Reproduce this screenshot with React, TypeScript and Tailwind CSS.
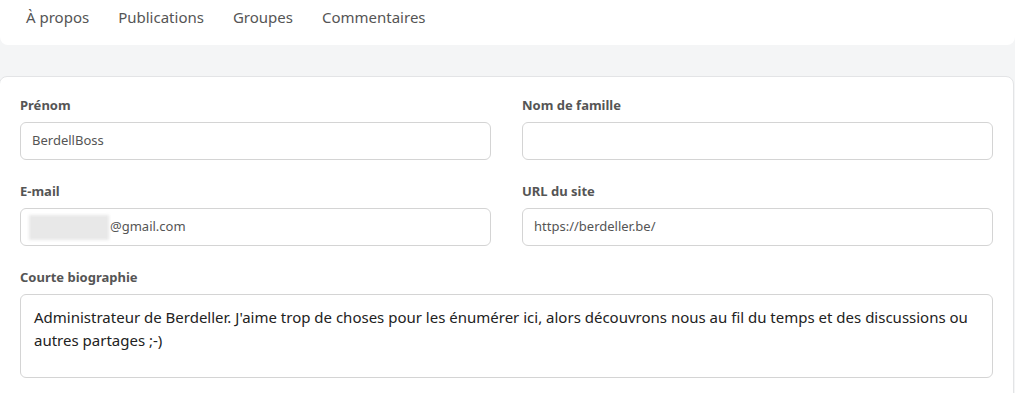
const tabs = ['À propos', 'Publications', 'Groupes', 'Commentaires']

function Field({ label, value, children }: { label: string; value?: string; children?: React.ReactNode }) {
  return (
    <div className="flex flex-col">
      <label className="text-[13px] font-bold text-[#555] leading-[18px] mb-[8px]">{label}</label>
      <div className="relative h-[38px] rounded-[6px] border border-[#d4d4d4] bg-white flex items-center px-[11px]">
        {children}
        {value && <span className="text-[13px] text-[#555]">{value}</span>}
      </div>
    </div>
  )
}

export default function App() {
  return (
    <div
      className="min-h-[393px] bg-[#f4f5f6] overflow-hidden"
      style={{ fontFamily: '"Segoe UI", "Noto Sans", "Open Sans", sans-serif' }}
    >
      {/* Tabs */}
      <div className="h-[45px] bg-white rounded-b-[8px] flex items-start gap-[29px] pl-[26px] pt-[6px]">
        {tabs.map((t) => (
          <span key={t} className="text-[15px] text-[#555] leading-[22px]">
            {t}
          </span>
        ))}
      </div>

      {/* Profile form */}
      <div className="mt-[31px] mr-px -ml-px bg-white border border-[#e3e4e6] rounded-t-[8px] px-[20px] pt-[19px] pb-[20px]">
        <div className="grid grid-cols-2 gap-x-[31px] gap-y-[22px]">
          <Field label="Prénom" value="BerdellBoss" />
          <Field label="Nom de famille" />
          <Field label="E-mail">
            <span className="w-[80px] h-[25px] -ml-[3px] mr-[1px] bg-[#e8e8e8] blur-[1.5px]" />
            <span className="text-[13px] text-[#555]">@gmail.com</span>
          </Field>
          <Field label="URL du site" value="https://berdeller.be/" />
          <div className="col-span-2 flex flex-col">
            <label className="text-[13px] font-bold text-[#555] leading-[18px] mb-[8px]">Courte biographie</label>
            <textarea
              readOnly
              className="h-[84px] resize-none rounded-[6px] border border-[#d4d4d4] px-[13px] pt-[11px] text-[15px] leading-[23px] text-[#222] outline-none"
              defaultValue="Administrateur de Berdeller. J'aime trop de choses pour les énumérer ici, alors découvrons nous au fil du temps et des discussions ou autres partages ;-)"
            />
          </div>
        </div>
      </div>
    </div>
  )
}
